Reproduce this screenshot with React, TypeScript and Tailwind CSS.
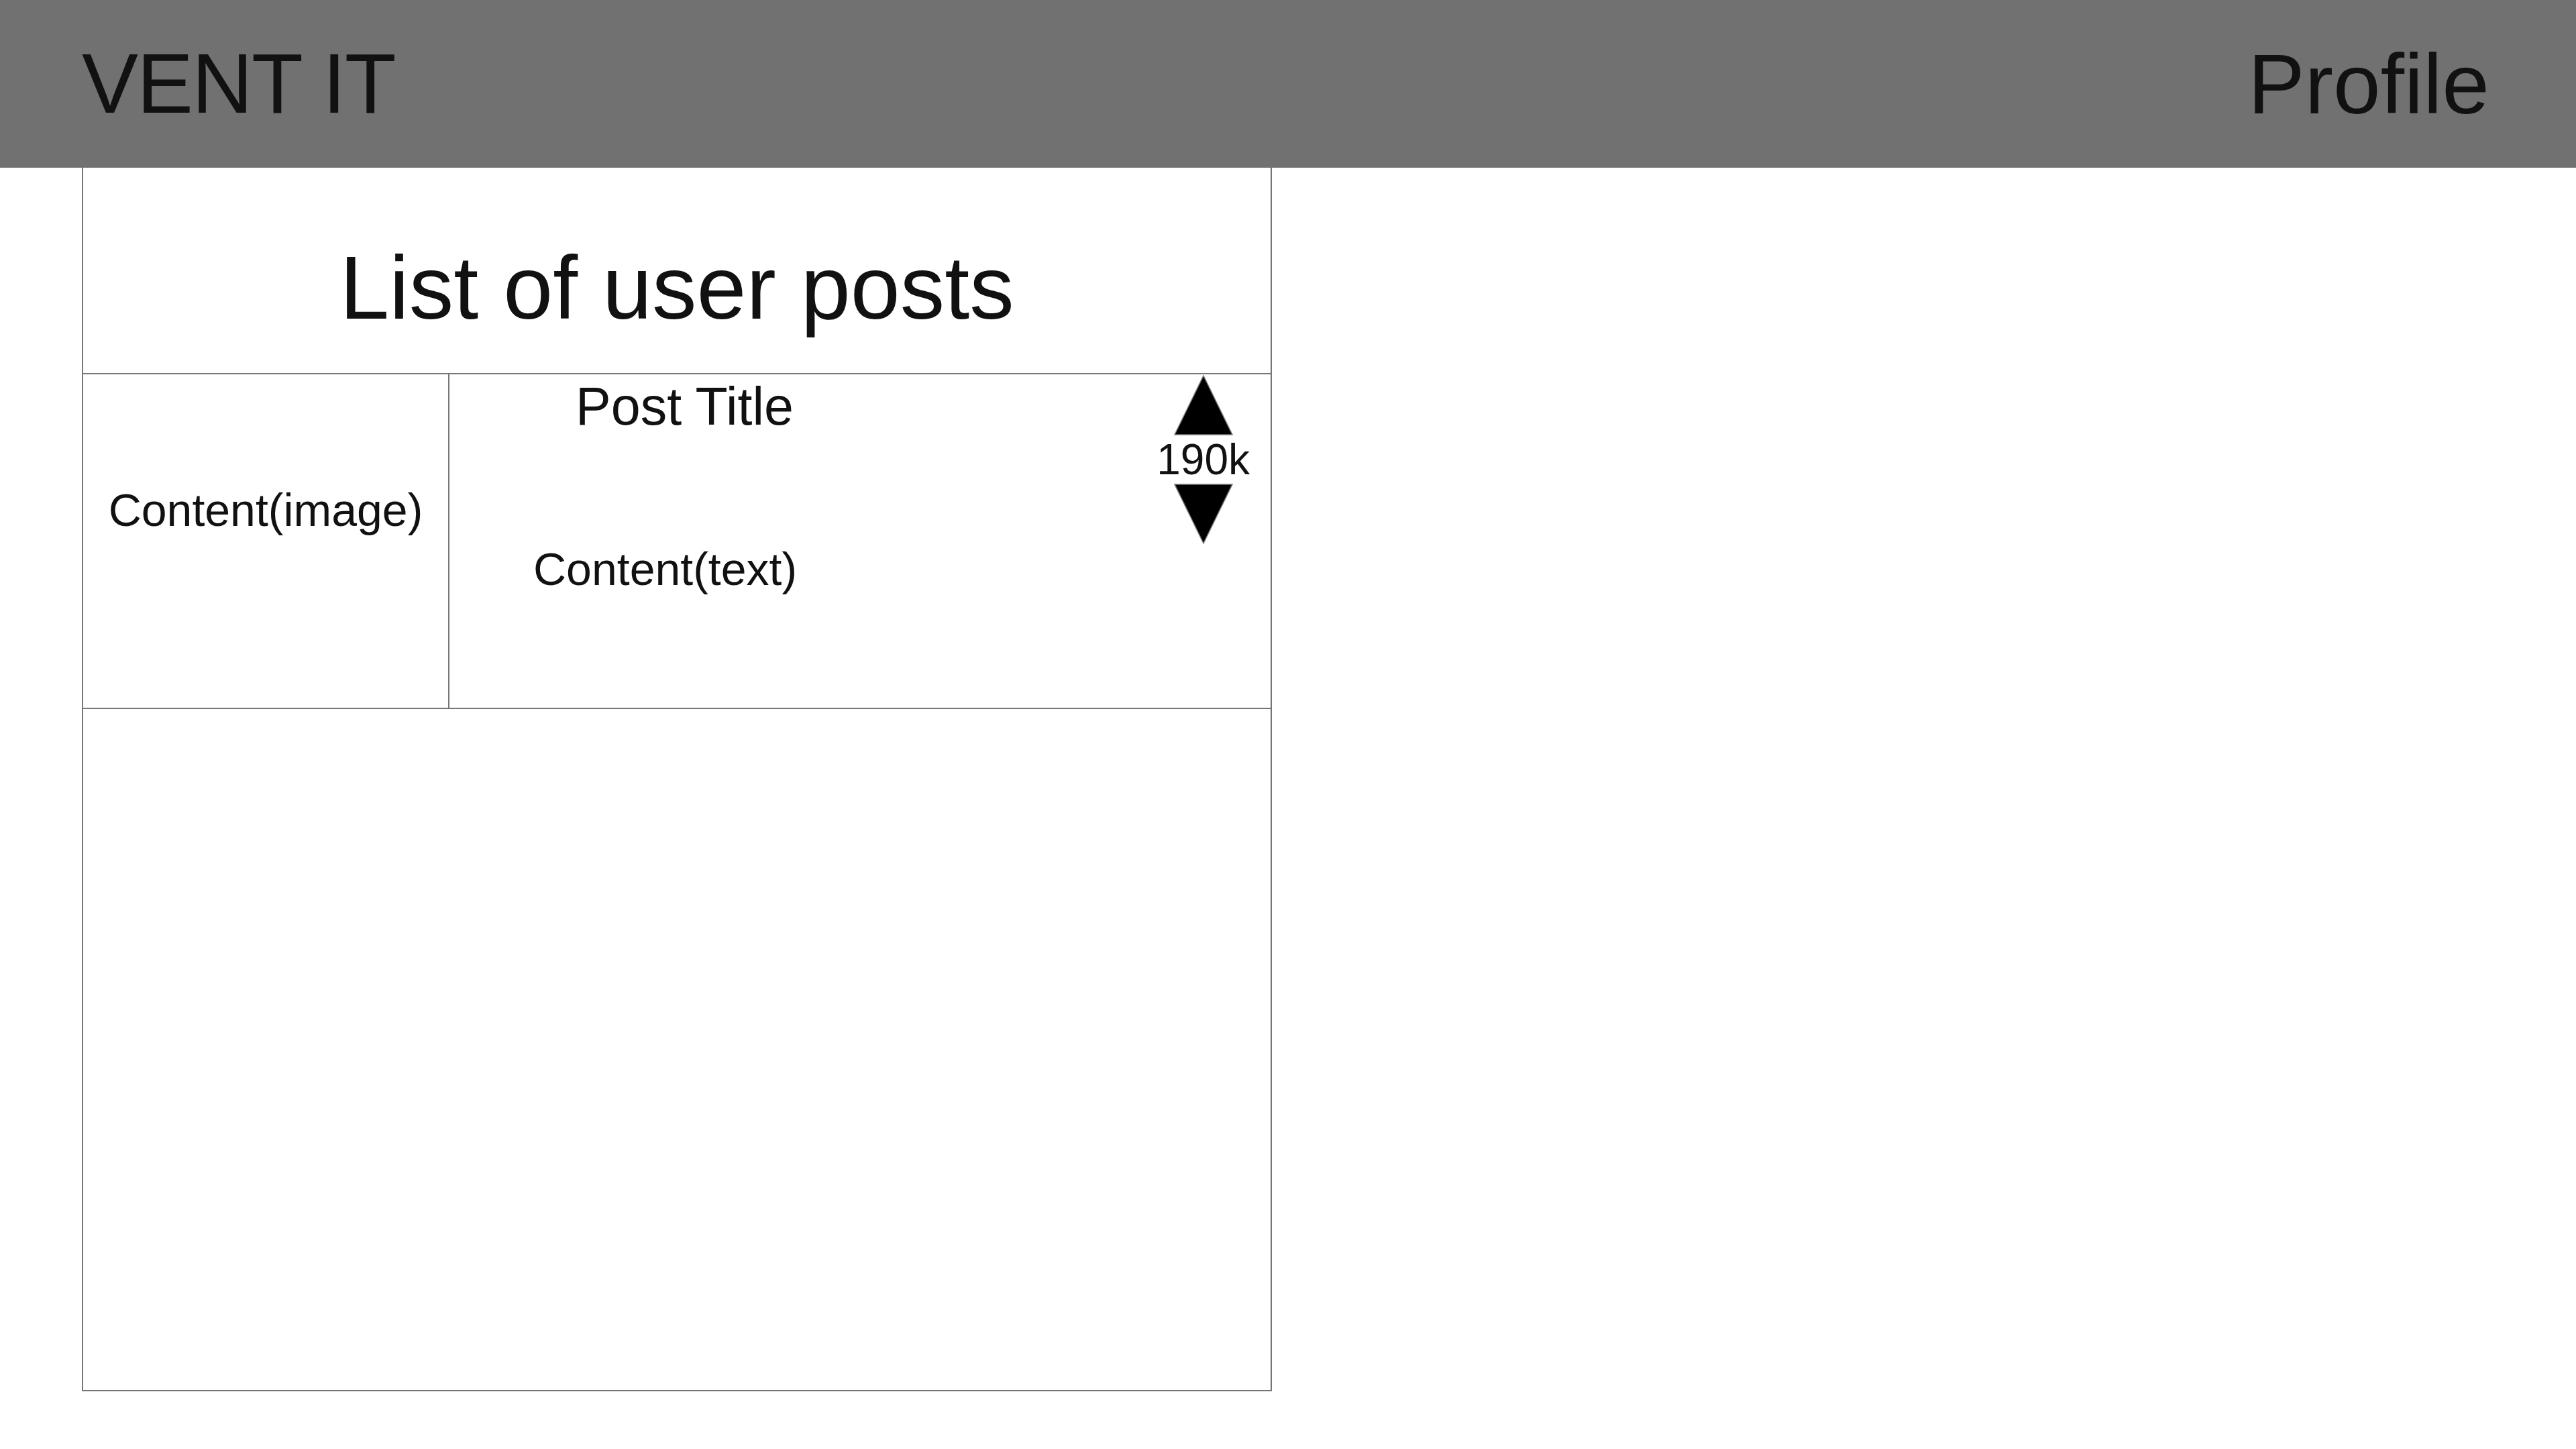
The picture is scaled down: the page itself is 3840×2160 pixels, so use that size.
import { Fragment } from "react";

interface Post {
  title: string;
  image: string;
  text: string;
  votes: string;
}

const posts: Post[] = [
  { title: "Post Title", image: "Content(image)", text: "Content(text)", votes: "190k" },
];

const VoteArrow = ({ down }: { down?: boolean }) => (
  <svg width="88" height="90" viewBox="0 0 88 90" className="block">
    <polygon
      points={down ? "1,1 87,1 44,89" : "44,1 87,89 1,89"}
      fill="#000"
      stroke="#7a7a7a"
      strokeWidth="1.5"
    />
  </svg>
);

const PostRow = ({ post }: { post: Post }) => {
  return (
    <div className="flex h-[499px] border-b-2 border-[#767676]">
      <div className="w-[546px] border-r-2 border-[#767676] pt-[168px] text-center text-[68px] leading-none">
        {post.image}
      </div>
      <div className="flex flex-1">
        <div className="flex-1">
          <p className="pl-[188px] pt-[8px] text-[79px] leading-none">{post.title}</p>
          <p className="pl-[125px] pt-[169px] text-[68px] leading-none">{post.text}</p>
        </div>
        <div className="flex flex-col items-center pr-[31px] pt-[1px]">
          <VoteArrow />
          <span className="mt-[4px] text-[64px] leading-none">{post.votes}</span>
          <div className="mt-[4px]">
            <VoteArrow down />
          </div>
        </div>
      </div>
    </div>
  );
};

const App = () => {
  return (
    <div className="min-h-screen bg-white font-['Liberation_Sans',Arial,sans-serif] text-[#111111]">
      <header className="flex h-[250px] items-center justify-between bg-[#717171] pl-[122px] pr-[129px]">
        <h1 className="text-[126px] leading-none tracking-[-2px]">VENT IT</h1>
        <span className="text-[127px] leading-none">Profile</span>
      </header>

      <main className="pl-[122px]">
        <section className="h-[1824px] w-[1774px] border-2 border-t-0 border-[#767676]">
          <div className="h-[308px] border-b-2 border-[#767676] pt-[113px] text-center text-[133px] leading-none">
            List of user posts
          </div>
          {posts.map((post, i) => (
            <Fragment key={i}>
              <PostRow post={post} />
            </Fragment>
          ))}
        </section>
      </main>
    </div>
  );
};

export default App;
